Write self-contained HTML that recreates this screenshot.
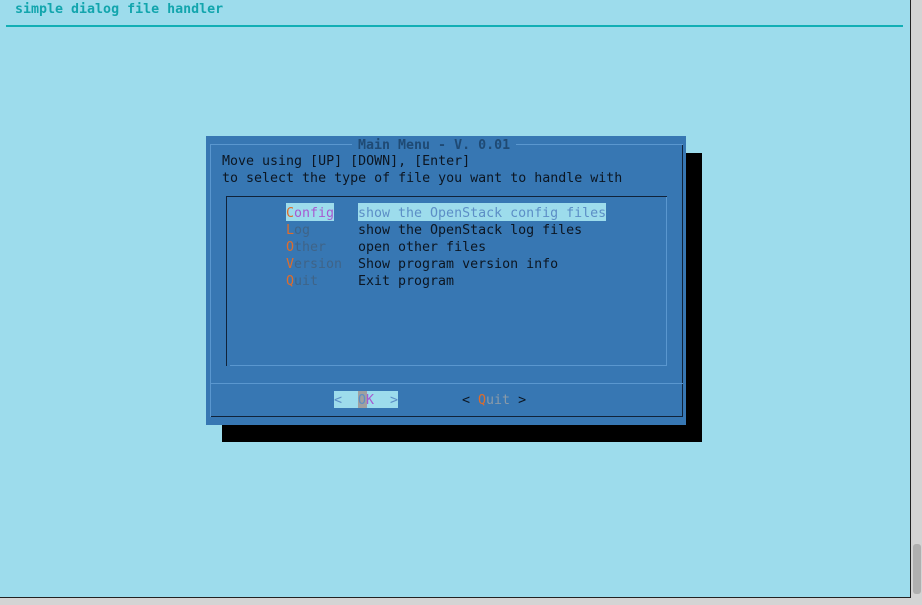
<!DOCTYPE html>
<html><head><meta charset="utf-8"><style>
html,body{margin:0;padding:0}
body{width:922px;height:605px;background:#d4d4d4;position:relative;overflow:hidden;font-family:"DejaVu Sans Mono","Liberation Mono",monospace;font-size:13.3px;}
.a{position:absolute;white-space:pre;line-height:17px}
#term{position:absolute;left:0;top:0;width:910px;height:597px;background:#9ddcec;border-right:1px solid #222;border-bottom:1px solid #222}
#sb{position:absolute;left:913px;top:544px;width:8px;height:50px;background:#b0b0b0;border-radius:3px}
.t{color:#e06c2a}
.d{color:#3f6488}
</style></head><body>
<div id="term"></div>
<div id="sb"></div>
<div class="a" style="left:15px;top:1px;color:#12a5ad;font-weight:bold">simple dialog file handler</div>
<div style="position:absolute;left:6px;top:25px;width:897px;height:2px;background:#12afb5"></div>

<div style="position:absolute;left:222px;top:153px;width:480px;height:289px;background:#000"></div>
<div style="position:absolute;left:206px;top:136px;width:480px;height:289px;background:#3777b3"></div>
<div style="position:absolute;left:210px;top:144px;width:1px;height:273px;background:#5a97cf"></div>
<div style="position:absolute;left:210px;top:144px;width:473px;height:1px;background:#5a97cf"></div>
<div style="position:absolute;left:682px;top:145px;width:1px;height:272px;background:#10233a"></div>
<div style="position:absolute;left:211px;top:416px;width:472px;height:1px;background:#10233a"></div>
<div class="a" style="left:352px;top:137px;background:#3777b3;color:#1f4a74;font-weight:bold;padding:0 6px">Main Menu - V. 0.01</div>
<div class="a" style="left:222px;top:153px;color:#0c1622">Move using [UP] [DOWN], [Enter]
to select the type of file you want to handle with</div>
<div style="position:absolute;left:226px;top:196px;width:441px;height:1px;background:#10233a"></div>
<div style="position:absolute;left:226px;top:196px;width:1px;height:170px;background:#10233a"></div>
<div style="position:absolute;left:666px;top:197px;width:1px;height:169px;background:#5a97cf"></div>
<div style="position:absolute;left:230px;top:365px;width:437px;height:1px;background:#5a97cf"></div>
<div style="position:absolute;left:211px;top:383px;width:472px;height:1px;background:#5a97cf"></div>

<div style="position:absolute;left:286px;top:203px;width:48px;height:18px;background:#9ddcec"></div>
<div style="position:absolute;left:358px;top:203px;width:248px;height:18px;background:#9ddcec"></div>
<div class="a" style="left:286px;top:205px"><span class="t">C</span><span style="color:#a75ad0">onfig</span></div>
<div class="a" style="left:358px;top:205px;color:#5c8ec6">show the OpenStack config files</div>
<div class="a" style="left:286px;top:222px"><span class="t">L</span><span class="d">og</span></div>
<div class="a" style="left:358px;top:222px;color:#0c1622">show the OpenStack log files</div>
<div class="a" style="left:286px;top:239px"><span class="t">O</span><span class="d">ther</span></div>
<div class="a" style="left:358px;top:239px;color:#0c1622">open other files</div>
<div class="a" style="left:286px;top:256px"><span class="t">V</span><span class="d">ersion</span></div>
<div class="a" style="left:358px;top:256px;color:#0c1622">Show program version info</div>
<div class="a" style="left:286px;top:273px"><span class="t">Q</span><span class="d">uit</span></div>
<div class="a" style="left:358px;top:273px;color:#0c1622">Exit program</div>

<div style="position:absolute;left:334px;top:391px;width:64px;height:17px;background:#9ddcec"></div>
<div style="position:absolute;left:358px;top:391px;width:9px;height:17px;background:#a0a0a0"></div>
<div class="a" style="left:334px;top:392px;color:#5c8ec6">&lt;  O<span style="color:#a75ad0">K</span>  &gt;</div>
<div class="a" style="left:462px;top:392px;color:#0c1622">&lt; <span class="t">Q</span><span style="color:#8a9aa8">uit</span> &gt;</div>
</body></html>
